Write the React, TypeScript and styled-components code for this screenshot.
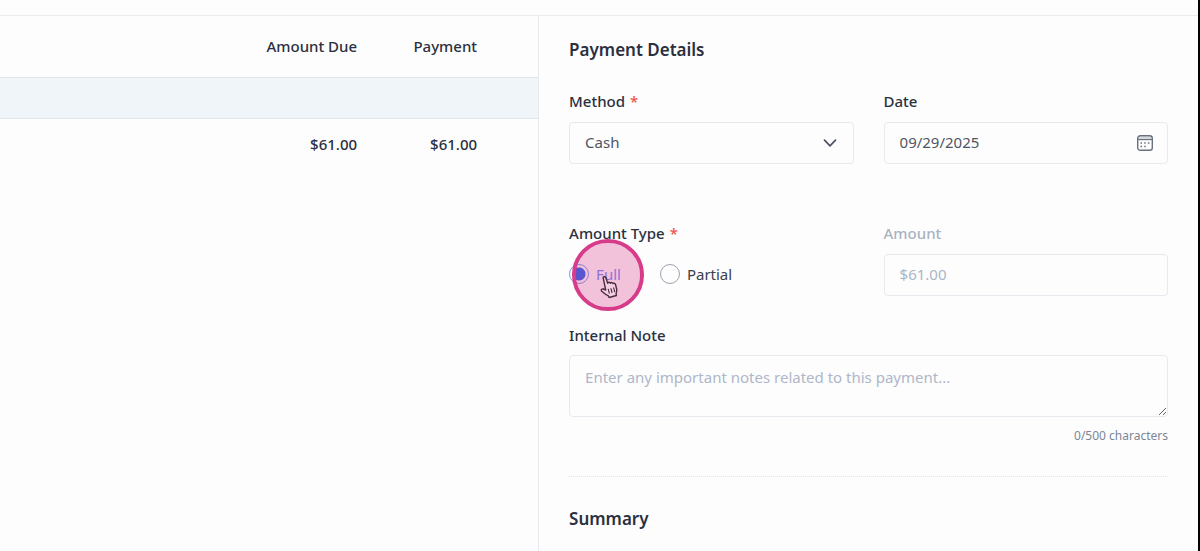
import React, { useState } from "react";
import styled, { createGlobalStyle } from "styled-components";

const GlobalStyle = createGlobalStyle`
  *, *::before, *::after { box-sizing: border-box; }
  body {
    margin: 0;
    background: #fdfdfd;
    color: #2b3040;
    font-family: "Noto Sans", sans-serif;
    font-size: 15px;
    line-height: 20px;
    overflow: hidden;
  }
  input, select, textarea, button { font: inherit; color: inherit; }
`;

const Page = styled.div`
  display: flex;
  flex-direction: column;
  min-height: 100vh;
  border-right: 2px solid #000;
`;

const TopBar = styled.header`
  height: 16px;
  border-bottom: 1px solid #ebecee;
`;

const Columns = styled.main`
  flex: 1;
  display: grid;
  grid-template-columns: 9fr 11fr;
`;

const InvoicePane = styled.section`
  border-right: 1px solid #e9eaed;
`;

const InvoiceTable = styled.table`
  width: 100%;
  border-collapse: separate;
  border-spacing: 0;
`;

const Cell = styled.td`
  width: 120px;
  height: 50px;
  padding: 0;
  text-align: right;
  font-weight: 500;
`;

const HeadCell = styled(Cell)`
  height: 62px;
  padding-bottom: 2px;
  border-bottom: 1px solid #dfe4e8;
`;

const GroupCell = styled.td`
  height: 41px;
  padding: 0;
  background: #eff5f8;
  border-bottom: 1px solid #e1e5ea;
`;

const FillCell = styled(Cell)`
  width: auto;
`;

const FillHeadCell = styled(HeadCell)`
  width: auto;
`;

const EdgeCell = styled(Cell)`
  width: 61px;
`;

const EdgeHeadCell = styled(HeadCell)`
  width: 61px;
`;

const DetailsPane = styled.form`
  display: flex;
  flex-direction: column;
  padding: 22px 30px 20px;
`;

const Heading = styled.h2`
  margin: 0;
  font-size: 17px;
  line-height: 24px;
  font-weight: 600;
`;

const FieldRow = styled.div<{ $top: number }>`
  display: grid;
  grid-template-columns: 1fr 1fr;
  gap: 30px;
  margin-top: ${(p) => p.$top}px;
`;

const Field = styled.div`
  display: flex;
  flex-direction: column;
  gap: 11px;
`;

const NoteField = styled(Field)`
  gap: 10px;
  margin-top: 29px;
`;

const Label = styled.label<{ $muted?: boolean }>`
  font-weight: 500;
  color: ${(p) => (p.$muted ? "#a9b3c3" : "inherit")};
`;

const RadioField = styled.fieldset`
  min-width: 0;
  margin: 0;
  padding: 0;
  border: 0;
`;

const Legend = styled.legend`
  padding: 0;
  margin-bottom: 11px;
  font-weight: 500;
`;

const Required = styled.span`
  margin-left: 5px;
  color: #ef5350;
`;

const Control = styled.div`
  display: flex;
  align-items: center;
  height: 42px;
  padding-right: 14px;
  border: 1px solid #e6e9ee;
  border-radius: 4px;
  color: #50555f;
`;

const TextInput = styled.input`
  flex: 1;
  min-width: 0;
  height: 40px;
  padding: 0 0 2px 15px;
  border: 0;
  outline: 0;
  background: transparent;
  &:disabled { color: #abb5c7; }
`;

const SelectWrap = styled.div`
  display: grid;
  align-items: center;
  color: #50555f;
  & > * { grid-area: 1 / 1; }
  & > svg {
    justify-self: end;
    margin-right: 16px;
    pointer-events: none;
  }
`;

const Select = styled.select`
  appearance: none;
  width: 100%;
  height: 42px;
  padding: 0 40px 2px 15px;
  border: 1px solid #e6e9ee;
  border-radius: 4px;
  background: transparent;
`;

const IconButton = styled.button`
  display: flex;
  padding: 0;
  border: 0;
  background: transparent;
`;

const RadioGroup = styled.div`
  position: relative;
  display: flex;
  align-items: center;
  gap: 39px;
  height: 40px;
`;

const RadioLabel = styled.label<{ $active: boolean }>`
  display: flex;
  align-items: center;
  gap: 7px;
  color: ${(p) => (p.$active ? "#7289fa" : "#3b404c")};
`;

const Radio = styled.input`
  appearance: none;
  width: 20px;
  height: 20px;
  margin: 0;
  border: 1px solid #9ba3b0;
  border-radius: 50%;
  &:checked {
    border-color: #6f9bea;
    background: radial-gradient(circle, #2160ee 6px, transparent 7px);
  }
`;

const ClickHalo = styled.div`
  position: absolute;
  left: 3px;
  top: -15px;
  width: 72px;
  height: 72px;
  border: 4px solid #d63c8a;
  border-radius: 50%;
  background: rgba(214, 60, 138, 0.3);
  background-clip: padding-box;
  pointer-events: none;
  & > svg {
    position: absolute;
    left: 23px;
    top: 33px;
  }
`;

const Note = styled.textarea`
  display: block;
  width: 100%;
  height: 62px;
  padding: 11px 15px;
  border: 1px solid #e6e9ee;
  border-radius: 4px;
  outline: 0;
  background: transparent;
  resize: vertical;
  &::placeholder { color: #adb7c9; opacity: 1; }
`;

const Counter = styled.span`
  align-self: flex-end;
  font-size: 12px;
  line-height: 18px;
  color: #7c8596;
`;

const Divider = styled.hr`
  width: 100%;
  margin: 31px 0 30px;
  border: 0;
  border-top: 1px dotted #e3e5e9;
`;

const ChevronIcon = () => (
  <svg width="16" height="16" viewBox="0 0 16 16" fill="none" stroke="#4a5263" strokeWidth="1.7" strokeLinecap="round" strokeLinejoin="round" aria-hidden="true">
    <path d="M2.500 5.200 8 10.800l5.500-5.600" />
  </svg>
);

const CalendarIcon = () => (
  <svg width="16" height="16" viewBox="0 0 16 16" fill="none" stroke="#69717f" aria-hidden="true">
    <path d="M1.500 2.500h13" stroke="#d5d9df" strokeWidth="2" />
    <rect x="0.7" y="0.7" width="14.600" height="14.600" rx="2.600" strokeWidth="1.400" />
    <path d="M1 4.500h14" strokeWidth="1.300" />
    <path d="M3.500 8h1.500M7.200 8h1.500M10.900 8h1.500M3.500 11.500h1.500M7.200 11.500h1.500" strokeWidth="1.700" />
  </svg>
);

const HandIcon = () => (
  <svg width="19" height="23" viewBox="0 0 19 23" fill="#f3cfe1" stroke="#4a2c42" strokeWidth="1.4" strokeLinejoin="round" strokeLinecap="round" aria-hidden="true">
    <path d="M4.200 2.200c-.4-1.500 1.900-2.100 2.500-.6l2 5.700c.3-1.400 2.300-1.500 2.700-.1.600-1 2.300-.8 2.600.4.900-.7 2.200-.2 2.500.9l1.100 4.300c.5 2.100-.2 3.400-.5 4.900l.3 1.800-7.300 2-1-1.900c-2.200-.8-4.300-2.600-6.300-4.400-1.200-1.200 0-2.700 1.500-2.200l2.400 1z" />
    <path d="m9.300 13.300 1 3.900M12 12.600l1 3.900M14.700 11.900l1 3.900" strokeWidth="1.100" />
  </svg>
);

export default function App() {
  const [amountType, setAmountType] = useState("full");
  const [date, setDate] = useState("09/29/2025");
  const [note, setNote] = useState("");

  return (
    <Page>
      <GlobalStyle />
      <TopBar />
      <Columns>
        <InvoicePane>
          <InvoiceTable>
            <thead>
              <tr>
                <FillHeadCell />
                <HeadCell as="th" scope="col">Amount Due</HeadCell>
                <HeadCell as="th" scope="col">Payment</HeadCell>
                <EdgeHeadCell />
              </tr>
            </thead>
            <tbody>
              <tr>
                <GroupCell colSpan={4} />
              </tr>
              <tr>
                <FillCell />
                <Cell>$61.00</Cell>
                <Cell>$61.00</Cell>
                <EdgeCell />
              </tr>
            </tbody>
          </InvoiceTable>
        </InvoicePane>

        <DetailsPane onSubmit={(e) => e.preventDefault()}>
          <Heading>Payment Details</Heading>

          <FieldRow $top={29}>
            <Field>
              <Label htmlFor="method">
                Method<Required>*</Required>
              </Label>
              <SelectWrap>
                <Select id="method" defaultValue="Cash">
                  <option>Cash</option>
                </Select>
                <ChevronIcon />
              </SelectWrap>
            </Field>
            <Field>
              <Label htmlFor="date">Date</Label>
              <Control>
                <TextInput id="date" value={date} onChange={(e) => setDate(e.target.value)} />
                <IconButton type="button" aria-label="Open calendar">
                  <CalendarIcon />
                </IconButton>
              </Control>
            </Field>
          </FieldRow>

          <FieldRow $top={59}>
            <RadioField>
              <Legend>
                Amount Type<Required>*</Required>
              </Legend>
              <RadioGroup>
                <RadioLabel $active={amountType === "full"}>
                  <Radio type="radio" name="amountType" checked={amountType === "full"} onChange={() => setAmountType("full")} />
                  Full
                </RadioLabel>
                <RadioLabel $active={amountType === "partial"}>
                  <Radio type="radio" name="amountType" checked={amountType === "partial"} onChange={() => setAmountType("partial")} />
                  Partial
                </RadioLabel>
                <ClickHalo>
                  <HandIcon />
                </ClickHalo>
              </RadioGroup>
            </RadioField>
            <Field>
              <Label htmlFor="amount" $muted>Amount</Label>
              <Control>
                <TextInput id="amount" value="$61.00" disabled readOnly />
              </Control>
            </Field>
          </FieldRow>

          <NoteField>
            <Label htmlFor="note">Internal Note</Label>
            <Note
              id="note"
              maxLength={500}
              placeholder="Enter any important notes related to this payment..."
              value={note}
              onChange={(e) => setNote(e.target.value)}
            />
            <Counter>{note.length}/500 characters</Counter>
          </NoteField>

          <Divider />
          <Heading>Summary</Heading>
        </DetailsPane>
      </Columns>
    </Page>
  );
}
